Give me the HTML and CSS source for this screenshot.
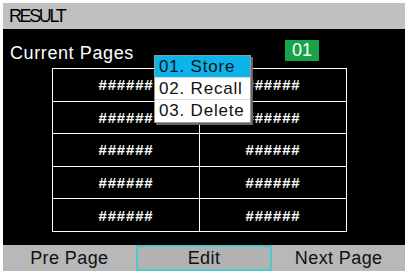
FILE: index.html
```html
<!DOCTYPE html>
<html>
<head>
    <title>Result</title>
    <link rel="stylesheet" href="styles.css">
</head>
<body>
    <div class="screen">
        <div class="header">RESULT</div>
        <div class="main">
            <div class="titleRow">
                <div class="title">Current Pages</div>
                <div class="badge">01</div>
            </div>
            <div class="grid">
                <div class="cell">######</div>
                <div class="cell">######</div>
                <div class="cell">######</div>
                <div class="cell">######</div>
                <div class="cell">######</div>
                <div class="cell">######</div>
                <div class="cell">######</div>
                <div class="cell">######</div>
                <div class="cell">######</div>
                <div class="cell">######</div>
            </div>
            <div class="menu">
                <div class="menuItem selected">01. Store</div>
                <div class="menuItem">02. Recall</div>
                <div class="menuItem">03. Delete</div>
            </div>
        </div>
        <div class="footer">
            <div class="key">Pre Page</div>
            <div class="key active">Edit</div>
            <div class="key">Next Page</div>
        </div>
    </div>
</body>
</html>
```

FILE: styles.css
```css
* {
    font-family: "Liberation Sans", Arial, sans-serif;
    box-sizing: border-box;
}
body {
    margin: 0;
    background: #fff;
}
.screen {
    margin: 3px 0 0 3px;
    width: 402px;
    height: 268px;
    display: flex;
    flex-direction: column;
}
.header {
    height: 26px;
    background: #c0c0c0;
    color: #000;
    font-size: 18px;
    letter-spacing: -2.4px;
    line-height: 26px;
    padding-left: 6px;
}
.main {
    position: relative;
    flex: 1;
    background: #000;
}
.titleRow {
    display: flex;
    height: 39px;
    padding-left: 7px;
    padding-top: 11px;
}
.title {
    color: #fff;
    font-size: 18px;
    letter-spacing: 0.6px;
    padding-top: 3px;
}
.badge {
    margin-left: auto;
    margin-right: 86px;
    width: 34px;
    height: 21px;
    background: #16a34a;
    color: #fff;
    font-size: 18px;
    text-align: center;
    line-height: 21px;
}
.grid {
    margin-left: 49px;
    width: 295px;
    height: 164px;
    display: grid;
    grid-template-columns: 1fr 1fr;
    grid-template-rows: repeat(5, 1fr);
    border-top: 1px solid #fff;
    border-left: 1px solid #fff;
}
.cell {
    border-right: 1px solid #fff;
    border-bottom: 1px solid #fff;
    color: #fff;
    font-weight: bold;
    font-size: 15px;
    letter-spacing: 0.8px;
    display: flex;
    align-items: center;
    justify-content: center;
}
.menu {
    position: absolute;
    left: 151px;
    top: 26px;
    width: 97px;
    background: #fff;
    border: 1px solid #9a9a9a;
    box-shadow: 2px 2px 0 #666;
}
.menuItem {
    height: 22px;
    line-height: 22px;
    padding-left: 4px;
    font-size: 17px;
    letter-spacing: 0.8px;
    color: #111;
    border-bottom: 1px solid #ddd;
}
.menuItem:last-child {
    border-bottom: none;
}
.menuItem.selected {
    background: #0cb4ec;
}
.footer {
    height: 26px;
    display: flex;
    background: #b8b8b8;
}
.key {
    flex: 1;
    text-align: center;
    font-size: 18px;
    letter-spacing: 0.4px;
    line-height: 26px;
    color: #111;
}
.key.active {
    border: 2px solid #4fc8cc;
    line-height: 22px;
    background: #b2b2b2;
}
```
